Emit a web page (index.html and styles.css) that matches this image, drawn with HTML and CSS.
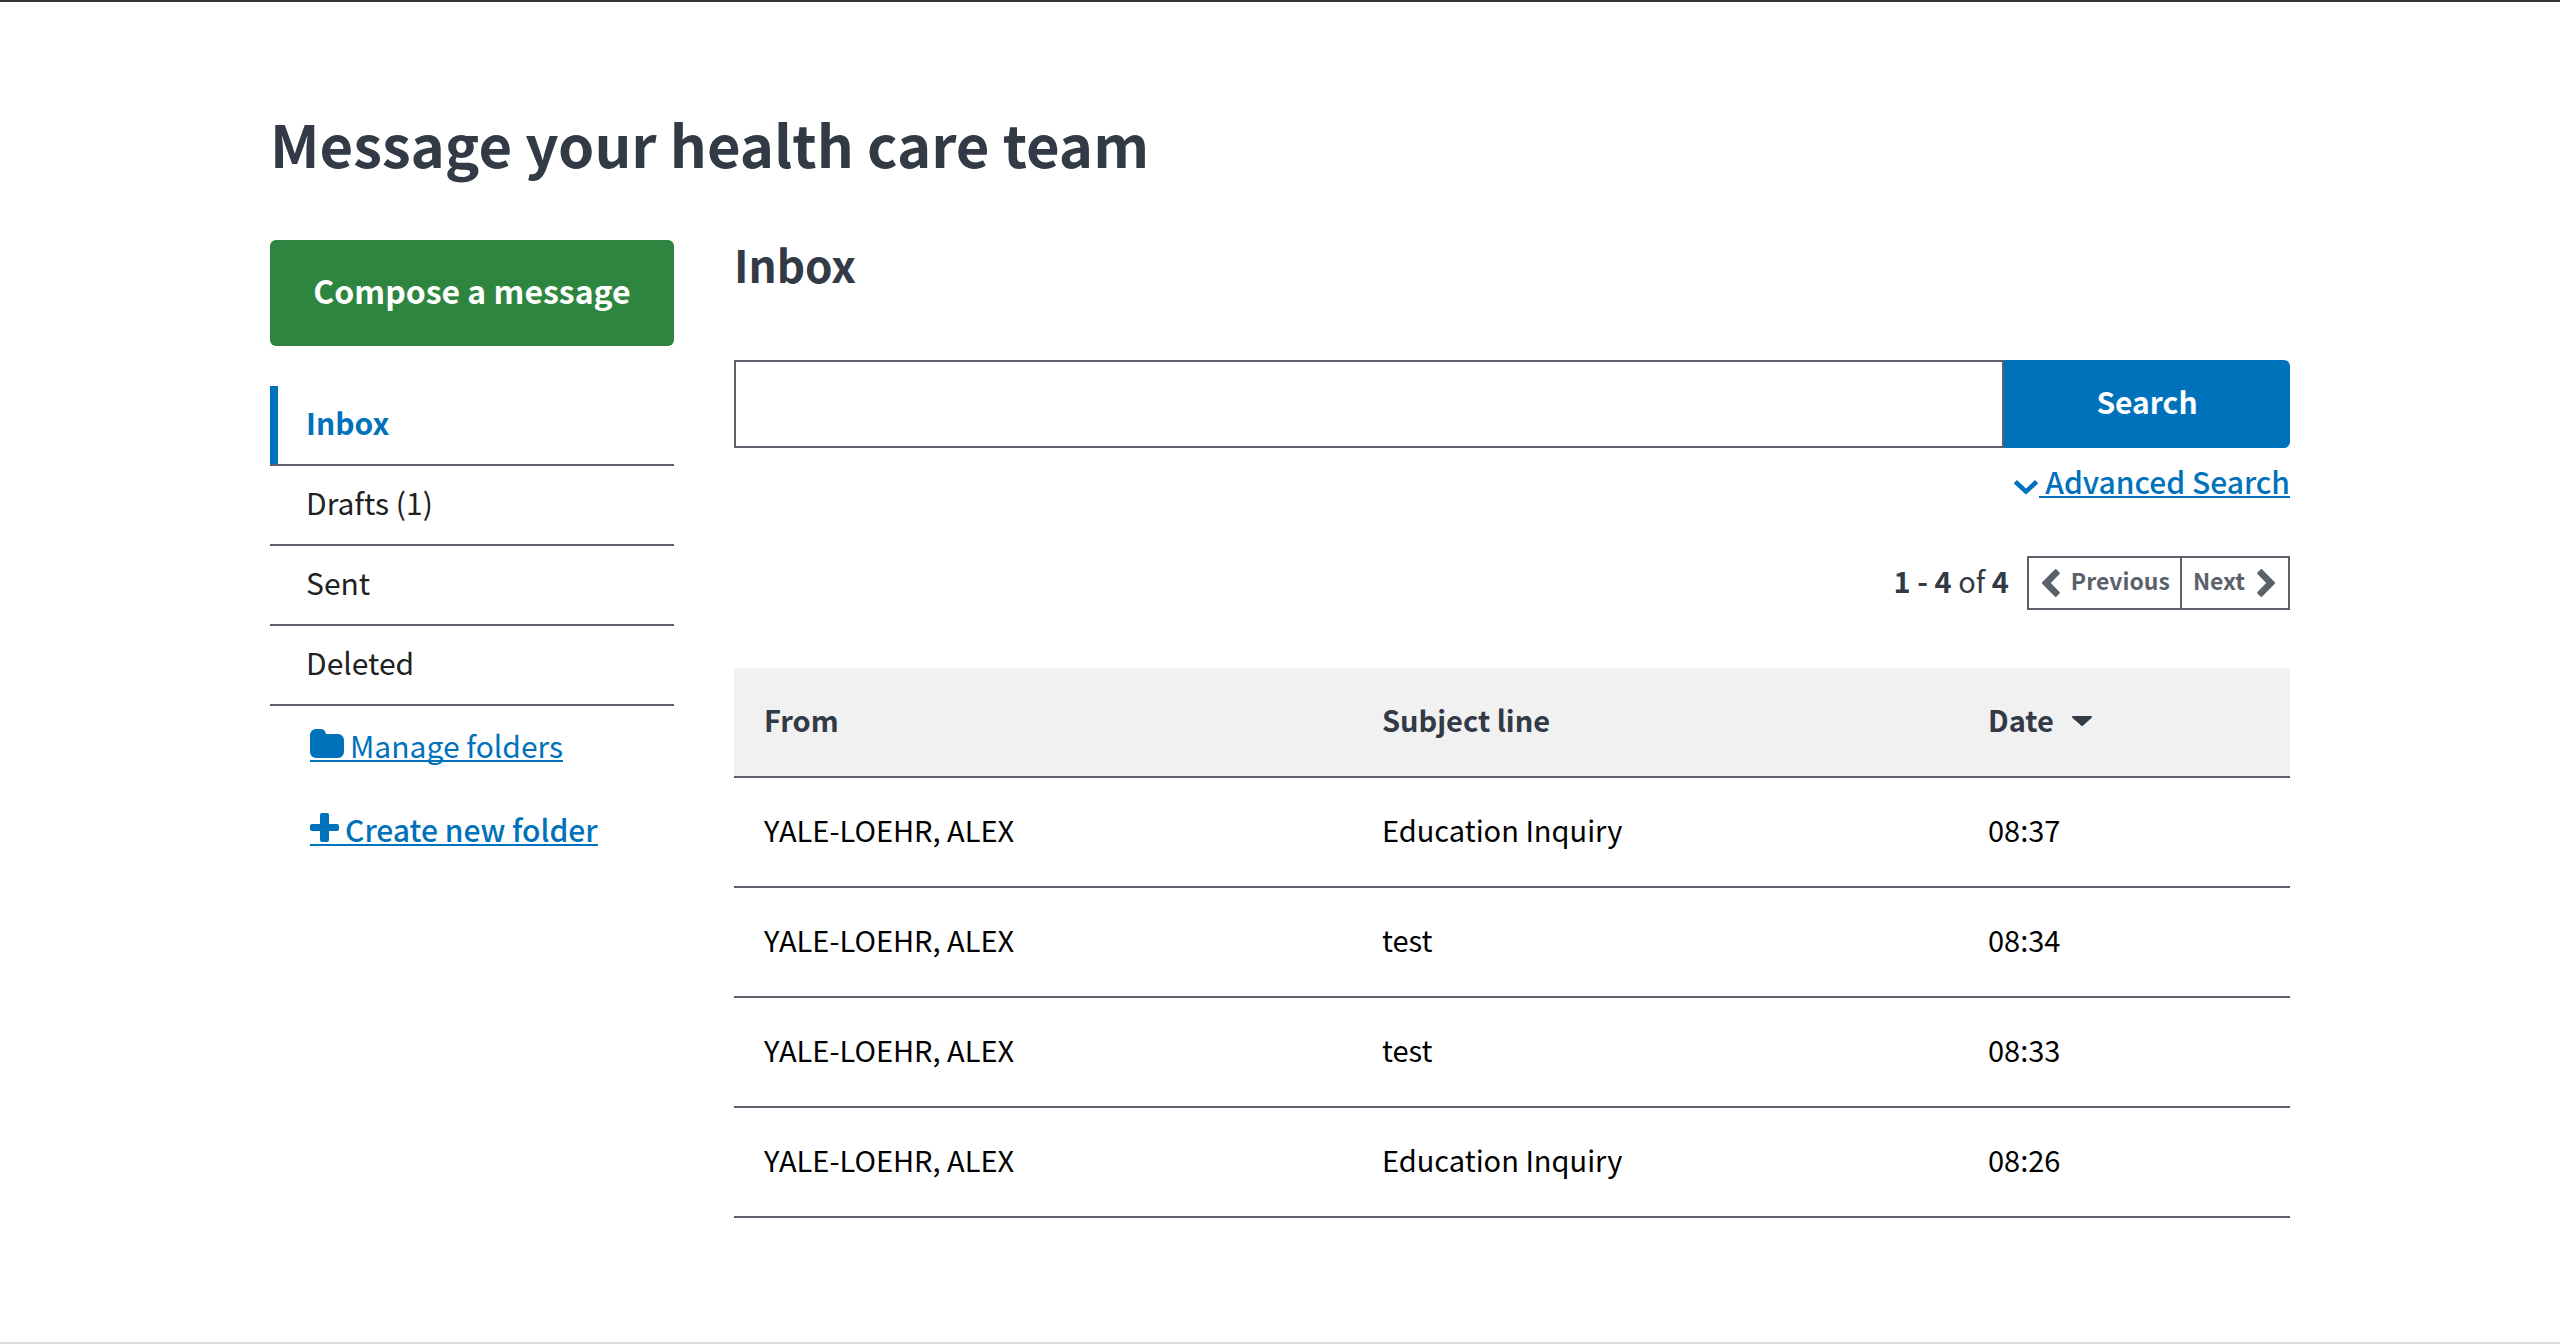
FILE: index.html
```html
<!DOCTYPE html>
<html lang="en">
<head>
<meta charset="utf-8">
<title>Message your health care team</title>
<link rel="stylesheet" href="styles.css">
</head>
<body>
<div class="page">
  <h1 class="page-title">Message your health care team</h1>
  <div class="columns">
    <aside class="sidebar">
      <button class="compose" type="button">Compose a message</button>
      <nav aria-label="Folders">
        <ul class="folders">
          <li><a class="folder folder-active" href="#inbox" aria-current="page">Inbox</a></li>
          <li><a class="folder" href="#drafts">Drafts (1)</a></li>
          <li><a class="folder" href="#sent">Sent</a></li>
          <li><a class="folder" href="#deleted">Deleted</a></li>
        </ul>
      </nav>
      <div class="folder-actions">
        <a class="link link-light" href="#manage"><svg class="icon-folder" viewBox="0 0 34 29" aria-hidden="true"><path d="M0 6a6 6 0 0 1 6-6h4a6 6 0 0 1 6 5h12a6 6 0 0 1 6 6v12a6 6 0 0 1-6 6H6a6 6 0 0 1-6-6z"/></svg><span>Manage folders</span></a>
        <a class="link" href="#create"><svg class="icon-plus" viewBox="0 0 29 29" aria-hidden="true"><path d="M12 0h5a2 2 0 0 1 2 2v9h8a2 2 0 0 1 2 2v3a2 2 0 0 1-2 2h-8v9a2 2 0 0 1-2 2h-5a2 2 0 0 1-2-2v-9H2a2 2 0 0 1-2-2v-3a2 2 0 0 1 2-2h8V2a2 2 0 0 1 2-2z"/></svg><span>Create new folder</span></a>
      </div>
    </aside>
    <main class="content">
      <h2 class="content-title">Inbox</h2>
      <form class="search" role="search">
        <input class="search-input" type="text" aria-label="Search messages">
        <button class="search-button" type="submit">Search</button>
      </form>
      <div class="advanced">
        <svg class="icon-down" viewBox="0 0 24 16" aria-hidden="true"><path d="M3 1l9 8.400 9-8.400 2.600 2.600a1 1 0 0 1 0 1.400L12.700 15a1 1 0 0 1-1.400 0L.400 5a1 1 0 0 1 0-1.400z"/></svg>
        <a class="link" href="#advanced"><span>Advanced Search</span></a>
      </div>
      <div class="paging">
        <span class="range"><b>1 - 4</b> of <b>4</b></span>
        <div class="pager">
          <button class="pager-button" type="button"><svg class="icon-chevron" viewBox="0 0 18 28" aria-hidden="true"><path d="M12.800.500a1.300 1.300 0 0 1 1.800 0l2.900 2.900a1.200 1.200 0 0 1 0 1.700L8.800 14l8.700 8.900a1.200 1.200 0 0 1 0 1.700l-2.900 2.900a1.300 1.300 0 0 1-1.800 0L.400 14.900a1.200 1.200 0 0 1 0-1.800z"/></svg><span>Previous</span></button>
          <button class="pager-button" type="button"><span>Next</span><svg class="icon-chevron" viewBox="0 0 18 28" aria-hidden="true"><path d="M5.200.500a1.300 1.300 0 0 0-1.800 0L.500 3.400a1.200 1.200 0 0 0 0 1.700L9.200 14 .500 22.900a1.200 1.200 0 0 0 0 1.700l2.900 2.900a1.300 1.300 0 0 0 1.800 0l12.400-12.600a1.200 1.200 0 0 0 0-1.800z"/></svg></button>
        </div>
      </div>
      <table class="messages">
        <thead>
          <tr><th class="col-from" scope="col">From</th><th class="col-subject" scope="col">Subject line</th><th scope="col" aria-sort="descending">Date<svg class="icon-caret" viewBox="0 0 20 10" aria-hidden="true"><path d="M1 0h18a1 1 0 0 1 .700 1.700l-8.900 8a1 1 0 0 1-1.400 0L.300 1.700A1 1 0 0 1 1 0z"/></svg></th></tr>
        </thead>
        <tbody>
          <tr><td>YALE-LOEHR, ALEX</td><td>Education Inquiry</td><td>08:37</td></tr>
          <tr><td>YALE-LOEHR, ALEX</td><td>test</td><td>08:34</td></tr>
          <tr><td>YALE-LOEHR, ALEX</td><td>test</td><td>08:33</td></tr>
          <tr><td>YALE-LOEHR, ALEX</td><td>Education Inquiry</td><td>08:26</td></tr>
        </tbody>
      </table>
    </main>
  </div>
</div>
</body>
</html>
```
FILE: styles.css
```css
* {
  box-sizing: border-box;
}

body {
  margin: 0;
  background: #fff;
  color: #212121;
  font-family: "Noto Sans CJK SC", "Open Sans", sans-serif;
  font-size: 30px;
  line-height: 40px;
}

button,
input {
  font: inherit;
}

svg {
  display: block;
  flex: none;
  fill: currentColor;
}

.page {
  min-height: 100vh;
  padding: 101px 270px 0;
  border-top: 2px solid #393639;
  border-bottom: 2px solid #dcdcdc;
}

.page-title {
  margin: 0;
  color: #323a45;
  font-size: 58px;
  line-height: 80px;
}

.columns {
  display: grid;
  grid-template-columns: 404px 1fr;
  gap: 60px;
  margin-top: 57px;
}

.compose {
  width: 100%;
  height: 106px;
  padding: 0 0 6px;
  border: 0;
  border-radius: 6px;
  background: #2e8540;
  color: #fff;
  font-size: 32px;
  font-weight: 700;
}

.folders {
  margin: 40px 0 0;
  padding: 0;
  list-style: none;
}

.folders li {
  border-bottom: 2px solid #5b616b;
}

.folder {
  display: block;
  padding: 16px 0 22px 36px;
  color: #212121;
  text-decoration: none;
}

.folder-active {
  padding-left: 28px;
  border-left: 8px solid #0071bb;
  color: #0071bb;
  font-weight: 700;
}

.folder-actions {
  display: flex;
  flex-direction: column;
  align-items: flex-start;
  gap: 51px;
  padding: 23px 0 0 40px;
}

.link {
  display: flex;
  border-bottom: 2px solid currentColor;
  color: #0071bb;
  font-weight: 500;
  line-height: 30px;
  text-decoration: none;
}

.link-light {
  font-weight: 400;
}

.link span {
  padding: 1px 0 0 6px;
}

.icon-folder {
  width: 34px;
  height: 29px;
}

.icon-plus {
  width: 29px;
  height: 29px;
}

.content-title {
  margin: 0;
  color: #323a45;
  font-size: 44px;
  line-height: 48px;
}

.search {
  display: flex;
  margin-top: 72px;
}

.search-input {
  flex: 1;
  height: 88px;
  padding: 0 20px;
  border: 2px solid #5b616b;
  border-radius: 0;
  outline: 0;
}

.search-button {
  width: 286px;
  padding: 0 0 6px;
  border: 0;
  border-radius: 0 6px 6px 0;
  background: #0071bb;
  color: #fff;
  font-weight: 700;
}

.advanced {
  display: flex;
  justify-content: flex-end;
  align-items: flex-end;
  gap: 1px;
  margin-top: 17px;
  color: #0071bb;
}

.icon-down {
  width: 24px;
  height: 16px;
  margin-bottom: 3px;
}

.paging {
  display: flex;
  justify-content: flex-end;
  align-items: center;
  gap: 18px;
  margin-top: 58px;
  color: #323a45;
}

.range {
  padding-bottom: 6px;
  font-size: 29px;
}

.pager {
  display: flex;
}

.pager-button {
  display: flex;
  align-items: center;
  gap: 11px;
  height: 54px;
  padding: 0 10px 0 13px;
  border: 2px solid #5b616b;
  background: #fff;
  color: #5b616b;
  font-size: 23px;
  font-weight: 700;
}

.pager-button span {
  padding-bottom: 6px;
}

.pager-button + .pager-button {
  gap: 12px;
  padding: 0 13px 0 11px;
  border-left: 0;
}

.icon-chevron {
  width: 18px;
  height: 28px;
}

.messages {
  width: 100%;
  margin-top: 58px;
  border-collapse: separate;
  border-spacing: 0;
  table-layout: fixed;
  color: #000;
  font-size: 29px;
  text-align: left;
}

.messages th,
.messages td {
  padding: 31px 0 37px 30px;
  border-bottom: 2px solid #5b616b;
}

.messages th {
  background: #f1f1f1;
  color: #323a45;
}

.col-from {
  width: 618px;
}

.col-subject {
  width: 606px;
}

.icon-caret {
  display: inline-block;
  width: 20px;
  height: 10px;
  margin-left: 18px;
  vertical-align: 6px;
}
```
